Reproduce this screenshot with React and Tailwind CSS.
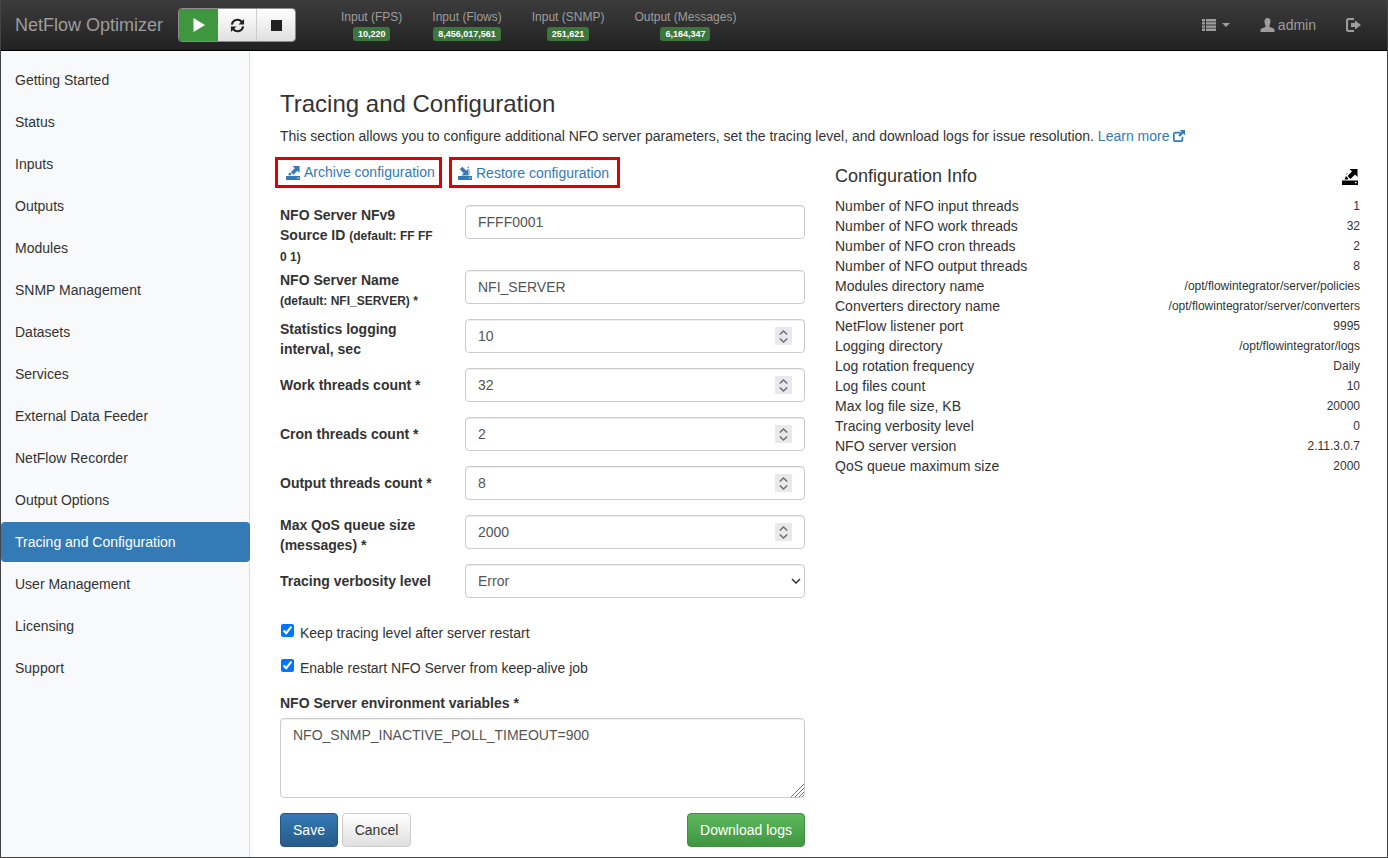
import React from 'react';

const navItems = [
  'Getting Started', 'Status', 'Inputs', 'Outputs', 'Modules', 'SNMP Management', 'Datasets', 'Services',
  'External Data Feeder', 'NetFlow Recorder', 'Output Options', 'Tracing and Configuration', 'User Management',
  'Licensing', 'Support',
];

const stats = [
  { label: 'Input (FPS)', value: '10,220' },
  { label: 'Input (Flows)', value: '8,456,017,561' },
  { label: 'Input (SNMP)', value: '251,621' },
  { label: 'Output (Messages)', value: '6,164,347' },
];

const configInfo = [
  ['Number of NFO input threads', '1'],
  ['Number of NFO work threads', '32'],
  ['Number of NFO cron threads', '2'],
  ['Number of NFO output threads', '8'],
  ['Modules directory name', '/opt/flowintegrator/server/policies'],
  ['Converters directory name', '/opt/flowintegrator/server/converters'],
  ['NetFlow listener port', '9995'],
  ['Logging directory', '/opt/flowintegrator/logs'],
  ['Log rotation frequency', 'Daily'],
  ['Log files count', '10'],
  ['Max log file size, KB', '20000'],
  ['Tracing verbosity level', '0'],
  ['NFO server version', '2.11.3.0.7'],
  ['QoS queue maximum size', '2000'],
];

const inputCls = 'h-[34px] w-[340px] rounded-[4px] border border-[#ccc] bg-white px-[12px] text-[14px] text-[#555] shadow-[inset_0_1px_1px_rgba(0,0,0,0.075)] outline-none';

const Tray = () => <path d="M0 11.500h16V16H0zM13 13v1.200h1.500V13z" fillRule="evenodd" />;

const ExportIcon = ({ className }) => (
  <svg viewBox="0 0 16 16" className={className} fill="currentColor">
    <path d="M15.500 0v8l-2.500-2.500-4.500 4.500-3-3 4.500-4.500L7.500 0z" />
    <path d="M4 6 5.500 4.500 5 4zM2.500 10.500 4 7l2.500 2.500-1 1z" />
    <Tray />
  </svg>
);

const ImportIcon = ({ className }) => (
  <svg viewBox="0 0 16 16" className={className} fill="currentColor">
    <path d="M12 10.800H4l2.500-2.500L2 3.800 5 .8l4.500 4.500L12 2.800z" />
    <path d="M10 .8h2.200l1.300 4v5.500L13 10.500V3z" />
    <Tray />
  </svg>
);

const NumberInput = ({ value }) => (
  <div className="relative w-[340px]">
    <input type="number" className={inputCls + ' [appearance:textfield]'} defaultValue={value} />
    <div className="absolute top-[8px] right-[13px] flex h-[18px] w-[17px] flex-col items-center justify-center gap-[3px] bg-[#e9e9ed]">
      <svg viewBox="0 0 9 5" className="h-[5px] w-[9px]" fill="none" stroke="#707070" strokeWidth="1.500"><path d="M.8 4.500 4.500 1l3.700 3.500" /></svg>
      <svg viewBox="0 0 9 5" className="h-[5px] w-[9px]" fill="none" stroke="#707070" strokeWidth="1.500"><path d="M.8.5 4.500 4l3.700-3.500" /></svg>
    </div>
  </div>
);

const Row = ({ label, height = 'h-[49px]', top = false, children }) => (
  <div className={`flex ${height}`}>
    <div className={`w-[185px] text-[14px] leading-[20px] font-bold text-[#333] ${top ? 'pt-[7px]' : ''}`}>{label}</div>
    <div>{children}</div>
  </div>
);

const Small = ({ children }) => <span className="text-[12px]">{children}</span>;

export default function App() {
  return (
    <div className="flex h-[858px] flex-col overflow-hidden border-x border-b border-[#444] bg-white font-['Liberation_Sans',Arial,sans-serif] text-[14px] text-[#333]">
      {/* Top bar */}
      <header className="flex h-[51px] shrink-0 items-center border-b border-black bg-linear-to-b from-[#3c3c3c] to-[#222] pl-[14px]">
        <span className="w-[163px] text-[18px] text-[#9d9d9d]">NetFlow Optimizer</span>
        <div className="flex h-[34px] w-[118px] overflow-hidden rounded-[4px] border border-[#ccc]/60">
          <div className="flex w-[39px] items-center justify-center bg-[#3e963f] text-white">
            <svg viewBox="0 0 14 14" className="h-[14px] w-[14px]" fill="currentColor"><path d="M1.500 0 13 7 1.500 14z" /></svg>
          </div>
          <div className="flex w-[39px] items-center justify-center border-r border-[#ccc] bg-linear-to-b from-white to-[#e0e0e0] text-[#222]">
            <svg viewBox="0 0 16 16" className="h-[15px] w-[15px]" fill="none" stroke="currentColor" strokeWidth="2.200">
              <path d="M2 7a6 6 0 0 1 10.500-3L14 5.500" />
              <path d="M14 9a6 6 0 0 1-10.500 3L2 10.500" />
              <path d="M15 1v6H9z" fill="currentColor" stroke="none" />
              <path d="M1 15V9h6z" fill="currentColor" stroke="none" />
            </svg>
          </div>
          <div className="flex flex-1 items-center justify-center bg-linear-to-b from-white to-[#e0e0e0]">
            <div className="h-[11px] w-[11px] bg-[#222]" />
          </div>
        </div>
        <div className="ml-[45px] flex gap-[30px]">
          {stats.map((s) => (
            <div key={s.label} className="flex flex-col items-center">
              <span className="text-[12px] leading-[17px] text-[#9d9d9d]">{s.label}</span>
              <span className="mt-[1px] rounded-[3px] bg-[#3c763d] px-[5px] text-[9px] leading-[14px] font-bold text-white">{s.value}</span>
            </div>
          ))}
        </div>
        <div className="ml-auto flex items-center pr-[26px] text-[#9d9d9d]">
          <svg viewBox="0 0 14 12" className="h-[12px] w-[14px]" fill="currentColor">
            <path d="M0 0h3v2.400H0zM4 0h10v2.400H4zM0 3.200h3v2.400H0zM4 3.200h10v2.400H4zM0 6.400h3v2.400H0zM4 6.400h10v2.400H4zM0 9.600h3V12H0zM4 9.600h10V12H4z" />
          </svg>
          <span className="ml-[6px] h-0 w-0 border-x-[4px] border-t-[4px] border-x-transparent border-t-[#9d9d9d]" />
          <svg viewBox="0 0 14 14" className="ml-[30px] h-[14px] w-[15px]" fill="currentColor">
            <path d="M7 0c2 0 3 1.500 3 3.500S9 8 8.700 8.500c.5 1 5.300 1.500 5.300 3.500v2H0v-2c0-2 4.800-2.500 5.300-3.500C5 8 4 5.500 4 3.500S5 0 7 0z" />
          </svg>
          <span className="ml-[3px] text-[14px]">admin</span>
          <svg viewBox="0 0 15 14" className="ml-[30px] h-[14px] w-[15px]" fill="currentColor">
            <path d="M2.500 0H8v2H3a1 1 0 0 0-1 1v8a1 1 0 0 0 1 1h5v2H2.500A2.500 2.500 0 0 1 0 11.500v-9A2.500 2.500 0 0 1 2.500 0z" />
            <path d="M9 2.500 15 7l-6 4.500V9H5V5h4z" />
          </svg>
        </div>
      </header>

      <div className="flex min-h-0 flex-1">
        {/* Sidebar */}
        <aside className="w-[249px] shrink-0 border-r border-[#ddd] bg-[#f8f9fb] pt-[7px]">
          {navItems.map((item) => (
            <div
              key={item}
              className={`mt-[2px] flex h-[40px] items-center rounded-[4px] px-[14px] text-[14px] ${
                item === 'Tracing and Configuration' ? '-mr-px bg-[#337ab7] text-white' : 'text-[#333]'
              }`}
            >
              {item}
            </div>
          ))}
        </aside>

        {/* Main */}
        <main className="min-w-0 flex-1 pt-[40px] pl-[30px]">
          <h1 className="text-[24px] leading-[26px] font-normal text-[#333]">Tracing and Configuration</h1>
          <p className="mt-[9px] text-[14px] leading-[20px]">
            This section allows you to configure additional NFO server parameters, set the tracing level, and download logs for issue resolution.{' '}
            <a className="text-[#337ab7]">
              Learn more
              <svg viewBox="0 0 14 14" className="ml-[4px] inline h-[12px] w-[12px] align-[-1px]" fill="currentColor">
                <path d="M3 2h6v2H3a1 1 0 0 0-1 1v6a1 1 0 0 0 1 1h6a1 1 0 0 0 1-1V8h2v3a3 3 0 0 1-3 3H3a3 3 0 0 1-3-3V5a3 3 0 0 1 3-3z" />
                <path d="M8 0h6v6l-2-2-4 4-2-2 4-4z" />
              </svg>
            </a>
          </p>

          <div className="mt-[11px] flex gap-[30px]">
            {/* Form column */}
            <div className="w-[525px] shrink-0">
              <div className="-ml-[5px] flex gap-[7px]">
                <a className="flex h-[31px] w-[167px] items-center border-[3px] border-[#e00000] pl-[8px] text-[#337ab7]">
                  <ExportIcon className="h-[14px] w-[14px]" />
                  <span className="ml-[4px]">Archive configuration</span>
                </a>
                <a className="flex h-[31px] w-[171px] items-center border-[3px] border-[#e00000] pl-[6px] text-[#337ab7]">
                  <ImportIcon className="h-[14px] w-[14px]" />
                  <span className="ml-[4px] pt-[2px]">Restore configuration</span>
                </a>
              </div>

              <div className="mt-[17px]">
                <Row height="h-[65px]" label={<>NFO Server NFv9<br />Source ID <Small>(default: FF FF<br />0 1)</Small></>}>
                  <input className={inputCls} defaultValue="FFFF0001" />
                </Row>
                <Row label={<>NFO Server Name<br /><Small>(default: NFI_SERVER) *</Small></>}>
                  <input className={inputCls} defaultValue="NFI_SERVER" />
                </Row>
                <Row label={<>Statistics logging<br />interval, sec</>}>
                  <NumberInput value="10" />
                </Row>
                <Row top label="Work threads count *">
                  <NumberInput value="32" />
                </Row>
                <Row top label="Cron threads count *">
                  <NumberInput value="2" />
                </Row>
                <Row top label="Output threads count *">
                  <NumberInput value="8" />
                </Row>
                <Row label={<>Max QoS queue size<br />(messages) *</>}>
                  <NumberInput value="2000" />
                </Row>
                <Row top label="Tracing verbosity level">
                  <div className="relative w-[340px]">
                    <select className={inputCls + ' appearance-none'} defaultValue="Error">
                      <option>Error</option>
                      <option>Warning</option>
                      <option>Info</option>
                    </select>
                    <svg viewBox="0 0 10 6" className="pointer-events-none absolute top-[14px] right-[4px] h-[6px] w-[10px]" fill="none" stroke="#333" strokeWidth="1.500">
                      <path d="M1 1 5 5l4-4" />
                    </svg>
                  </div>
                </Row>
              </div>

              <label className="mt-[10px] flex h-[20px] items-center pl-[1px]">
                <input type="checkbox" defaultChecked className="mb-[5px] h-[13px] w-[13px]" />
                <span className="ml-[6px]">Keep tracing level after server restart</span>
              </label>
              <label className="mt-[15px] flex h-[20px] items-center pl-[1px]">
                <input type="checkbox" defaultChecked className="mb-[5px] h-[13px] w-[13px]" />
                <span className="ml-[6px]">Enable restart NFO Server from keep-alive job</span>
              </label>

              <div className="mt-[15px] leading-[20px] font-bold">NFO Server environment variables *</div>
              <div className="relative mt-[5px]">
                <textarea
                  className="block h-[80px] w-[525px] resize-none rounded-[4px] border border-[#ccc] px-[12px] py-[6px] text-[14px] leading-[20px] text-[#555] shadow-[inset_0_1px_1px_rgba(0,0,0,0.075)] outline-none"
                  defaultValue="NFO_SNMP_INACTIVE_POLL_TIMEOUT=900"
                />
                <svg viewBox="0 0 14 14" className="absolute right-[1px] bottom-[1px] h-[14px] w-[14px]" stroke="#777" strokeWidth="1">
                  <path d="M1 14 14 1M5 14 14 5M9 14l5-5M12 14l2-2" />
                </svg>
              </div>

              <div className="mt-[15px] flex items-center">
                <button className="h-[34px] w-[58px] rounded-[4px] border border-[#245580] bg-linear-to-b from-[#337ab7] to-[#265a88] text-white">Save</button>
                <button className="ml-[4px] h-[34px] w-[69px] rounded-[4px] border border-[#ccc] bg-linear-to-b from-white to-[#e0e0e0] text-[#333]">Cancel</button>
                <button className="ml-auto h-[34px] w-[118px] rounded-[4px] border border-[#3e8f3e] bg-linear-to-b from-[#5cb85c] to-[#419641] text-white">Download logs</button>
              </div>
            </div>

            {/* Configuration info column */}
            <div className="w-[525px] shrink-0">
              <div className="mt-[4px] mb-[4px] flex h-[31px] items-center justify-between">
                <h2 className="text-[18px] font-normal text-[#333]">Configuration Info</h2>
                <ExportIcon className="mr-[2px] h-[18px] w-[16px] text-black" />
              </div>
              <div>
                {configInfo.map(([name, value]) => (
                  <div key={name} className="flex h-[20px] items-center justify-between">
                    <span className="text-[14px]">{name}</span>
                    <span className="text-[12px]">{value}</span>
                  </div>
                ))}
              </div>
            </div>
          </div>
        </main>
      </div>
    </div>
  );
}
